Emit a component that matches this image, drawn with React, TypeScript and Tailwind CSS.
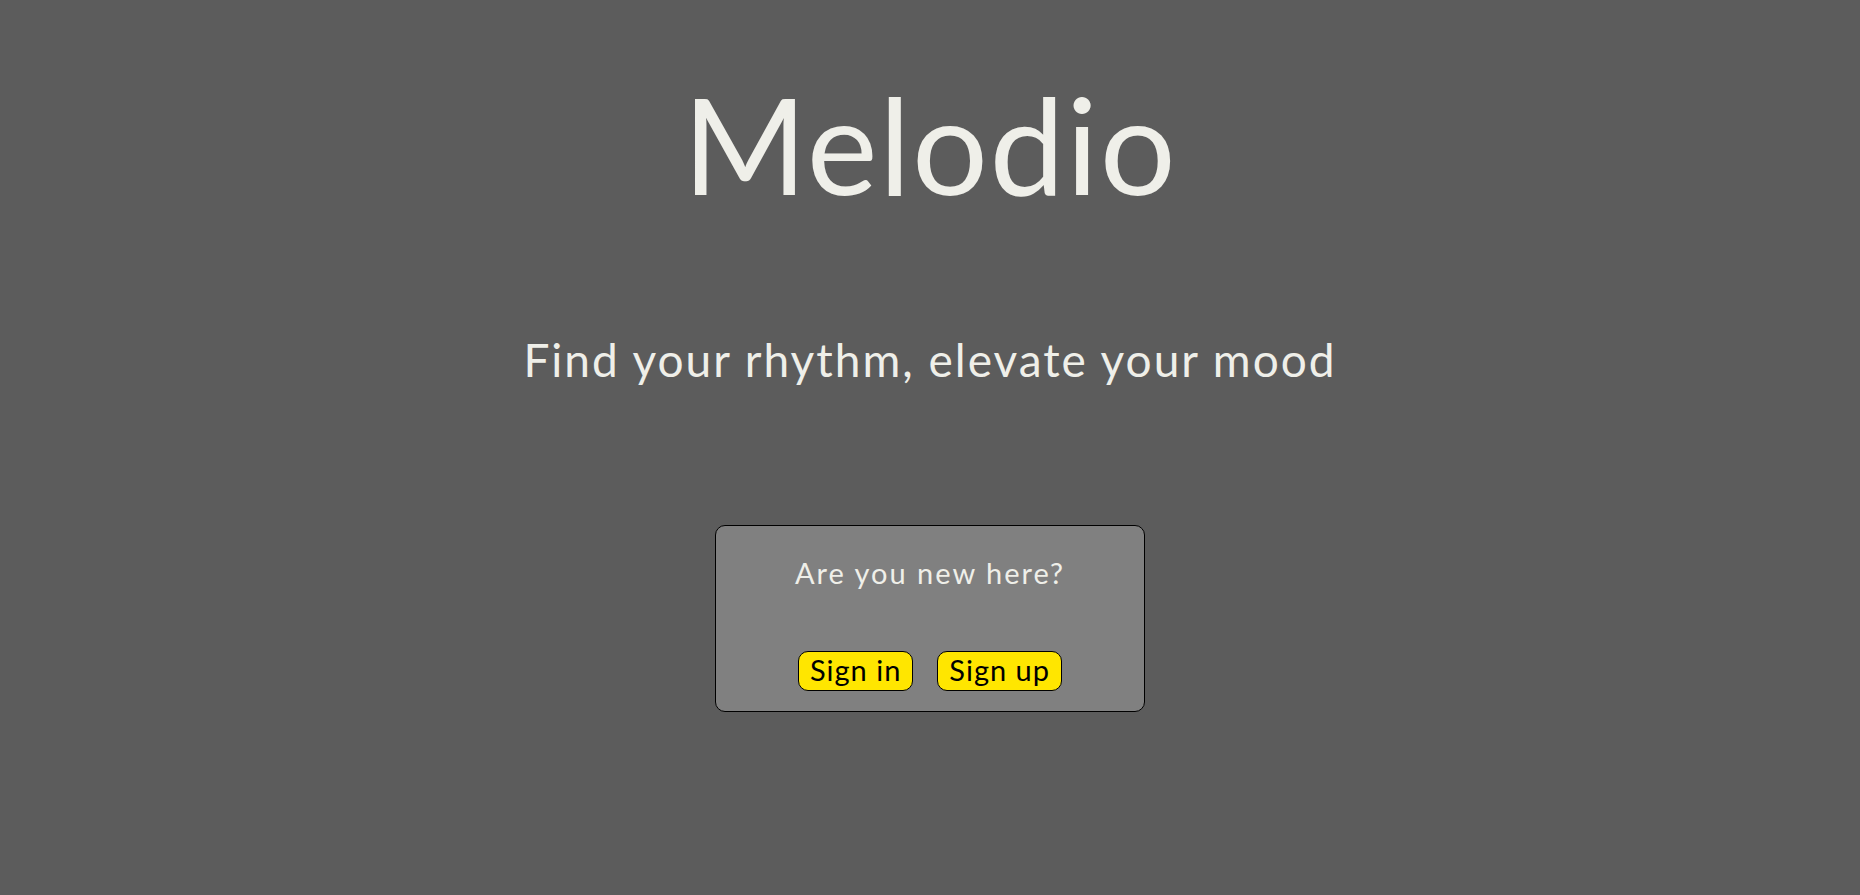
export default function App() {
  return (
    <div className="min-h-screen w-full bg-[#5c5c5c] font-['Lato','Noto_Sans',sans-serif] text-[#efefe9]">
      <div className="flex flex-col items-center pt-[64px]">
        <h1 className="text-[134px] leading-[1.2] font-normal tracking-[1.5px]">Melodio</h1>
        <p className="mt-[107px] text-[46px] leading-[1.2] tracking-[2px]">Find your rhythm, elevate your mood</p>
        <div className="mt-[138px] flex h-[187px] w-[430px] flex-col items-center rounded-[10px] border border-black bg-[#808080] pt-[28px]">
          <p className="text-[29px] leading-[1.3] tracking-[2px]">Are you new here?</p>
          <div className="mt-[59px] flex gap-[24px]">
            <button className="h-[40px] rounded-[10px] border border-black bg-[#ffe600] px-[11px] pb-[3px] text-[29px] leading-none tracking-[1px] text-black">
              Sign in
            </button>
            <button className="h-[40px] rounded-[10px] border border-black bg-[#ffe600] px-[11px] pb-[3px] text-[29px] leading-none tracking-[1px] text-black">
              Sign up
            </button>
          </div>
        </div>
      </div>
    </div>
  );
}
